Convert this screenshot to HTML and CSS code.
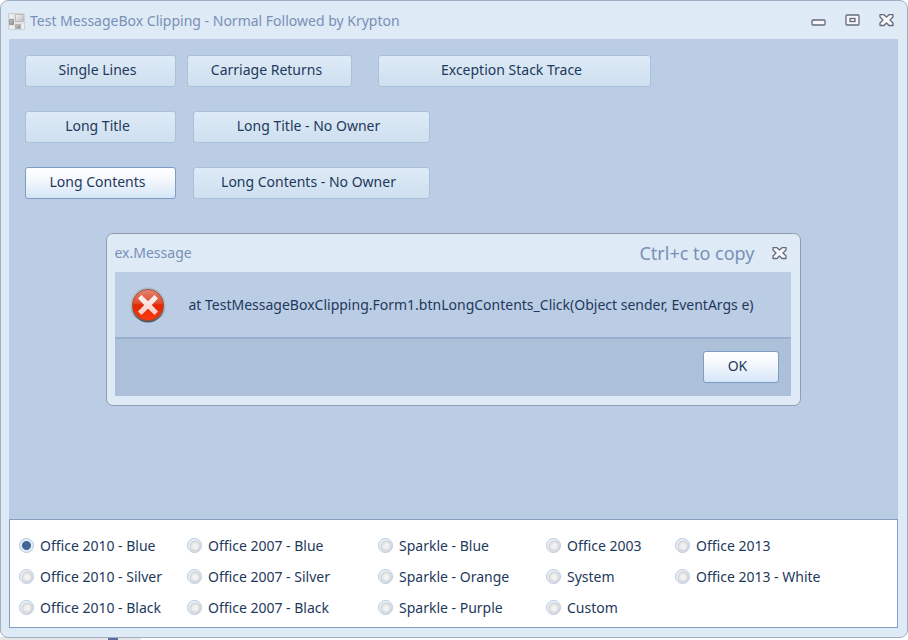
FILE: index.html
```
<!DOCTYPE html>
<html lang="en">
<head>
<meta charset="utf-8">
<title>Test MessageBox Clipping</title>
<link rel="stylesheet" href="styles.css">
</head>
<body>
<svg class="defs" width="0" height="0" aria-hidden="true">
  <symbol id="close" viewBox="0 0 15 13">
    <path d="M1 .7h4l2.500 2.300L10 .7h4V3l-3 3 3 3v2.500h-4L7.500 9 5 11.500H1V9l3-3-3-3z" fill="#f6f6fb" stroke="#656a7a" stroke-width="1.300" stroke-linejoin="round"/>
  </symbol>
</svg>
<main class="window">
  <header class="titlebar">
    <svg class="app-icon" width="17" height="17" viewBox="0 0 17 17" aria-hidden="true">
      <defs>
        <linearGradient id="tile" x1="0" y1="0" x2="1" y2="1"><stop offset="0" stop-color="#f4f4f4"/><stop offset="1" stop-color="#bcbcbc"/></linearGradient>
        <linearGradient id="dark" x1="0" y1="0" x2="1" y2="1"><stop offset="0" stop-color="#cfcfcf"/><stop offset="1" stop-color="#858585"/></linearGradient>
      </defs>
      <path d="M.5.5h16v16H.5z" fill="#e0e3e5" stroke="#cdd2d6"/>
      <path d="M7.500 1.500h8v7h-8z" fill="url(#tile)" stroke="#b9bcbe"/>
      <path d="M1.500 6.500h4v5h-4z" fill="url(#dark)" stroke="#999"/>
      <path d="M7.500 11.500h5v4h-5z" fill="url(#dark)" stroke="#b5b5b5"/>
      <path d="M2 2h3v3H2zM2 13h4v3H2zM14 11h2v5h-2z" fill="#eff0f1"/>
    </svg>
    <h1 class="title">Test MessageBox Clipping - Normal Followed by Krypton</h1>
    <div class="controls">
      <button class="control" aria-label="Minimize"><svg width="15" height="13" viewBox="0 0 15 13"><rect x="1" y="6" width="13" height="5" rx="1" fill="#f6f6fb" stroke="#656a7a" stroke-width="1.300"/></svg></button>
      <button class="control" aria-label="Maximize"><svg width="15" height="13" viewBox="0 0 15 13"><rect x="1" y="1" width="13" height="10" rx="1" fill="#f6f6fb" stroke="#656a7a" stroke-width="1.300"/><rect x="5" y="4.500" width="5" height="3" fill="#f6f6fb" stroke="#656a7a" stroke-width="1.300"/></svg></button>
      <button class="control" aria-label="Close"><svg width="15" height="13"><use href="#close"/></svg></button>
    </div>
  </header>
  <div class="client">
    <section class="actions">
      <div class="row">
        <button class="btn narrow">Single Lines</button>
        <button class="btn medium">Carriage Returns</button>
        <button class="btn widest">Exception Stack Trace</button>
      </div>
      <div class="row spaced">
        <button class="btn narrow">Long Title</button>
        <button class="btn wide">Long Title - No Owner</button>
      </div>
      <div class="row spaced">
        <button class="btn narrow active">Long Contents</button>
        <button class="btn wide">Long Contents - No Owner</button>
      </div>
    </section>
    <form class="themes">
      <label class="theme"><input type="radio" name="theme" checked>Office 2010 - Blue</label>
      <label class="theme"><input type="radio" name="theme">Office 2010 - Silver</label>
      <label class="theme"><input type="radio" name="theme">Office 2010 - Black</label>
      <label class="theme"><input type="radio" name="theme">Office 2007 - Blue</label>
      <label class="theme"><input type="radio" name="theme">Office 2007 - Silver</label>
      <label class="theme"><input type="radio" name="theme">Office 2007 - Black</label>
      <label class="theme"><input type="radio" name="theme">Sparkle - Blue</label>
      <label class="theme"><input type="radio" name="theme">Sparkle - Orange</label>
      <label class="theme"><input type="radio" name="theme">Sparkle - Purple</label>
      <label class="theme"><input type="radio" name="theme">Office 2003</label>
      <label class="theme"><input type="radio" name="theme">System</label>
      <label class="theme"><input type="radio" name="theme">Custom</label>
      <label class="theme"><input type="radio" name="theme">Office 2013</label>
      <label class="theme"><input type="radio" name="theme">Office 2013 - White</label>
    </form>
  </div>
</main>
<div class="overlay">
  <section class="dialog" role="dialog" aria-labelledby="dialog-title">
    <header class="dialog-bar">
      <h2 class="title" id="dialog-title">ex.Message</h2>
      <span class="hint">Ctrl+c to copy</span>
      <button class="control" aria-label="Close message"><svg width="15" height="13"><use href="#close"/></svg></button>
    </header>
    <div class="message">
      <svg class="error-icon" width="36" height="36" viewBox="0 0 36 36" aria-hidden="true">
        <defs>
          <linearGradient id="rim" x1="0" y1="0" x2="0" y2="1"><stop offset="0" stop-color="#a9b7c3"/><stop offset=".5" stop-color="#b9c0c4"/><stop offset="1" stop-color="#4b5358"/></linearGradient>
          <linearGradient id="red" x1="0" y1="0" x2="0" y2="1"><stop offset="0" stop-color="#e58573"/><stop offset=".45" stop-color="#e14a2c"/><stop offset=".5" stop-color="#e32500"/><stop offset="1" stop-color="#ff3a0c"/></linearGradient>
          <linearGradient id="cross" x1="0" y1="0" x2="0" y2="1"><stop offset="0" stop-color="#fff5f3"/><stop offset="1" stop-color="#f2cbc5"/></linearGradient>
        </defs>
        <circle cx="18" cy="18" r="17.500" fill="url(#rim)"/>
        <circle cx="18" cy="18" r="15.600" fill="url(#red)" stroke="#8e4a3c" stroke-width=".8"/>
        <path d="M11.500 8 18 14.200 24.500 8 28 11.500 21.800 18 28 24.500 24.500 28 18 21.800 11.500 28 8 24.500 14.200 18 8 11.500z" fill="url(#cross)"/>
      </svg>
      <p class="message-text">at TestMessageBoxClipping.Form1.btnLongContents_Click(Object sender, EventArgs e)</p>
    </div>
    <footer class="dialog-footer"><button class="btn ok active">OK</button></footer>
  </section>
</div>
</body>
</html>
```
FILE: styles.css
```
* { box-sizing: border-box; }
body {
  margin: 0;
  min-height: 100vh;
  display: flex;
  flex-direction: column;
  padding-bottom: 2px;
  background:
    linear-gradient(#5b6b9c, #5b6b9c) 108px 100% / 10px 3px no-repeat,
    linear-gradient(#e6e6e6, #e6e6e6) 0 100% / 141px 3px no-repeat,
    #fff;
  color: #1e395b;
  font: 14px/20px "Segoe UI", "Noto Sans", sans-serif;
}
.defs { position: absolute; }
.window {
  flex: 1;
  display: flex;
  flex-direction: column;
  padding: 0 9px 9px 8px;
  background: #deeaf6;
  border: 1px solid #a0afc3;
  border-radius: 8px;
}
.titlebar {
  height: 38px;
  display: flex;
  align-items: center;
  gap: 5px;
  padding-top: 2px;
}
.app-icon { margin-left: -1px; }
.title {
  flex: 1;
  margin: 0;
  font-size: 14px;
  font-weight: 400;
  color: #7990b6;
}
.controls { display: flex; gap: 19px; padding: 0 4px 2px 0; }
.control { display: flex; padding: 0; border: 0; background: none; }
.client {
  flex: 1;
  display: flex;
  flex-direction: column;
  justify-content: space-between;
  background: #bbcde5;
}
.actions {
  display: flex;
  flex-direction: column;
  gap: 24px;
  padding: 16px;
}
.row { display: flex; gap: 11px; }
.spaced { gap: 17px; }
.btn {
  height: 32px;
  padding: 0 8px 2px 2px;
  border: 1px solid #abc0d9;
  border-radius: 3px;
  background: linear-gradient(#deebf8, #cfdfee);
  color: inherit;
  font: inherit;
}
.narrow { width: 151px; }
.medium { width: 165px; }
.wide { width: 237px; }
.widest { width: 273px; margin-left: 15px; }
.active {
  border-color: #7f9dc2;
  background: linear-gradient(#fff, #f4f8fd 40%, #d5e5f7);
}
.themes {
  display: grid;
  grid-template-columns: 168px 191px 168px 129px 1fr;
  grid-template-rows: repeat(3, 31px);
  grid-auto-flow: column;
  padding: 10px 9px 4px;
  background: #fff;
  border: 1px solid #859ebf;
}
.theme { display: flex; align-items: center; gap: 6px; white-space: nowrap; }
.theme input {
  appearance: none;
  width: 15px;
  height: 15px;
  margin: 0;
  border: 1px solid #b5c8e0;
  border-radius: 50%;
  background: radial-gradient(circle at 55% 55%, #f2f2f2 0 2px, #e2e2e2 4px, #cfd1d4 5px, #e9f0f8 6px);
}
.theme input:checked {
  background: radial-gradient(circle, #436697 0 4px, #e4edf7 5px);
}
.overlay {
  position: absolute;
  inset: 0 2px 1px 0;
  display: grid;
  place-items: center;
}
.dialog {
  width: 695px;
  max-width: 100%;
  padding: 0 9px 9px 8px;
  background: #deeaf6;
  border: 1px solid #929eae;
  border-radius: 7px;
}
.dialog-bar { height: 38px; display: flex; align-items: center; padding-right: 4px; }
.hint { margin-right: 17px; font-size: 18px; color: #7990b6; }
.message {
  display: flex;
  align-items: center;
  gap: 23px;
  height: 67px;
  padding: 0 15px;
  background: #bbcde5;
  border-bottom: 2px solid #98afd0;
}
.message-text { margin: 0; white-space: nowrap; }
.dialog-footer {
  display: flex;
  justify-content: flex-end;
  padding: 12px 12px 13px;
  background: #adc0da;
}
.ok { width: 76px; }
```
